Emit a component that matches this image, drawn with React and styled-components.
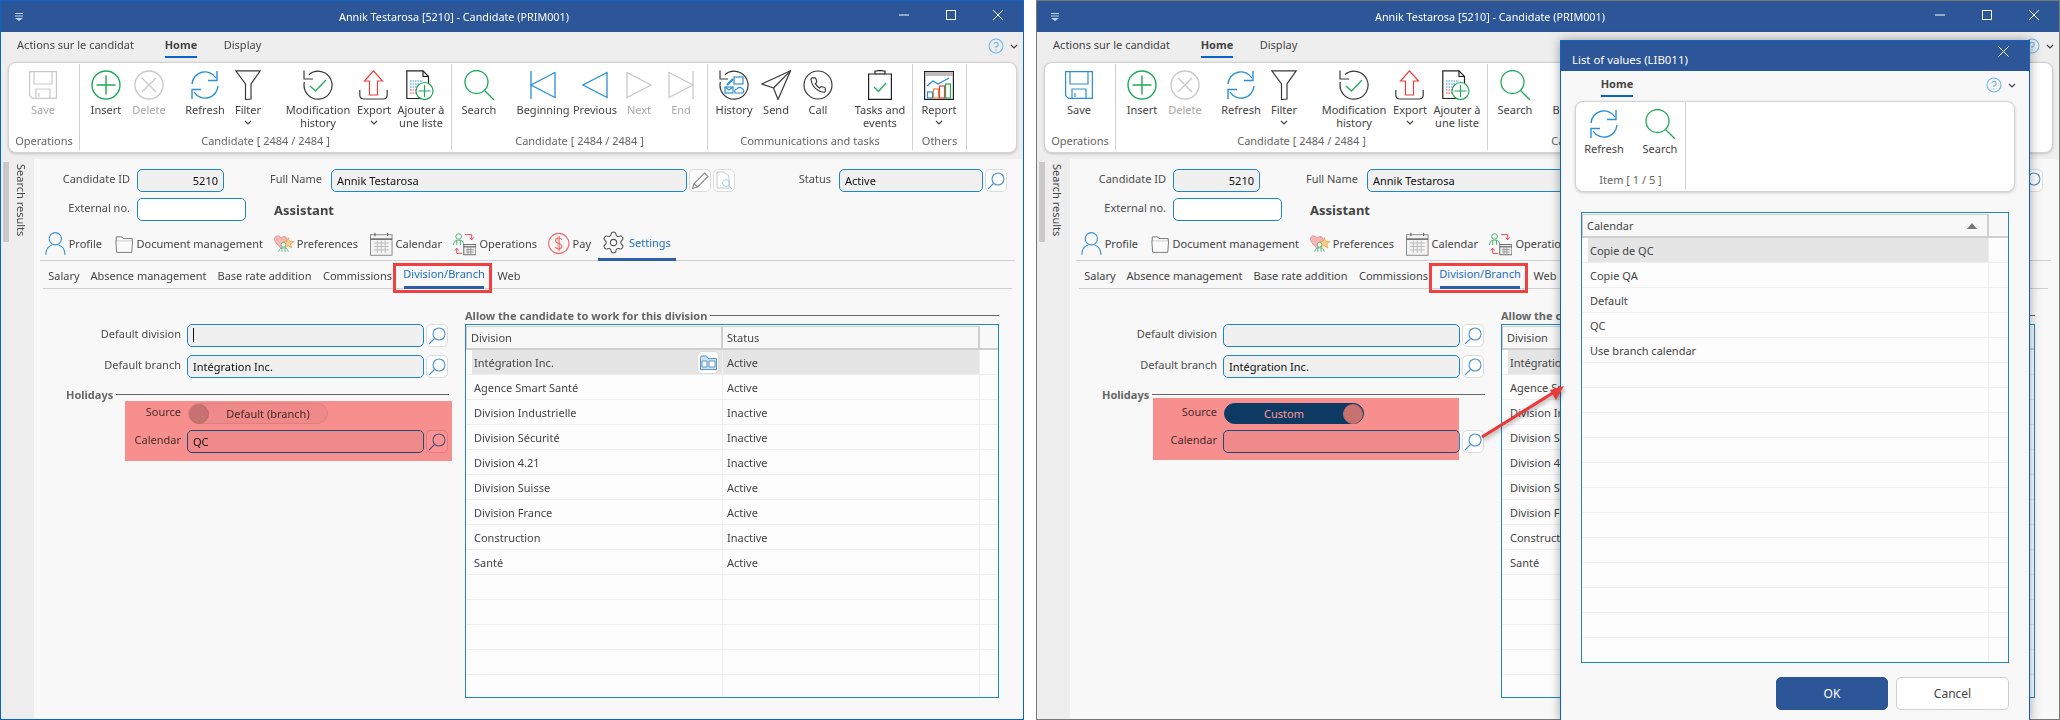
import React from "react";
import styled, { createGlobalStyle } from "styled-components";
import { Settings } from "lucide-react";

const GlobalStyle = createGlobalStyle`
  html, body { margin: 0; padding: 0; background: #fff; overflow: hidden; }
  body { font-family: "Noto Sans", "Open Sans", sans-serif; font-size: 11px; color: #444; }
  * { box-sizing: border-box; }
`;

const BLUE = "#2a8fd8";
const GREEN = "#1fa855";
const GREY = "#c9c9c9";
const DARK = "#3a3a3a";
const RED = "#ea4040";

const Page = styled.div`
  display: flex;
  gap: 12px;
  width: 2060px;
  height: 720px;
`;

const Window = styled.div`
  position: relative;
  display: flex;
  flex-direction: column;
  flex: none;
  width: 1024px;
  height: 720px;
  border: 1px solid ${(p) => p.$border};
  background: #f8f8f8;
`;

const TitleBar = styled.div`
  display: flex;
  align-items: center;
  height: 31px;
  padding-left: 14px;
  background: #2c5697;
  color: #fff;
  font-size: 10.8px;
`;

const QuickMenu = styled.svg`
  flex: none;
  width: 8px;
  height: 8px;
`;

const TitleText = styled.div`
  margin-left: 316px;
  width: 541px;
  white-space: nowrap;
`;

const WinControl = styled.button`
  display: flex;
  align-items: center;
  justify-content: center;
  width: 47px;
  height: 31px;
  padding: 0 0 4px;
  border: 0;
  background: none;
`;

const TopArea = styled.div`
  background: #eeeeee;
  padding-bottom: 6px;
`;

const RibbonTabs = styled.div`
  display: flex;
  align-items: stretch;
  height: 30px;
  padding-left: ${(p) => p.$pad || 16}px;
  padding-right: ${(p) => p.$padRight || 0}px;
`;

const RibbonTab = styled.div`
  display: flex;
  align-items: center;
  height: 26px;
  margin-left: ${(p) => p.$ml || 0}px;
  width: ${(p) => p.$w}px;
  justify-content: center;
  white-space: nowrap;
  font-size: 11px;
  color: #444;
  font-weight: ${(p) => (p.$active ? 700 : 400)};
  border-bottom: 2px solid ${(p) => (p.$active ? "#0a64c8" : "transparent")};
`;

const HelpBox = styled.div`
  display: flex;
  align-items: center;
  gap: 6px;
  margin-left: auto;
  height: 28px;
`;

const Ribbon = styled.div`
  display: flex;
  width: ${(p) => p.$w}px;
  height: 91px;
  margin-left: ${(p) => p.$ml}px;
  padding: 1px 0 2px;
  background: #fff;
  border: 1px solid #d2d2d2;
  border-radius: 8px;
  box-shadow: 0 1px 3px rgba(0, 0, 0, 0.18);
`;

const RibbonGroup = styled.div`
  display: flex;
  flex-direction: column;
  flex: none;
  width: ${(p) => p.$w}px;
  border-right: 1px solid #d0d0d0;
`;

const GroupItems = styled.div`
  display: flex;
  flex: 1;
`;

const GroupLabel = styled.div`
  height: 18px;
  line-height: 18px;
  text-align: center;
  color: #666;
  white-space: nowrap;
`;

const Item = styled.div`
  display: flex;
  flex-direction: column;
  align-items: center;
  flex: none;
  width: ${(p) => p.$w}px;
  margin-left: ${(p) => p.$ml}px;
  padding-top: 5px;
  color: ${(p) => (p.$off ? "#a8a8a8" : "#444")};
`;

const IconBox = styled.div`
  display: flex;
  align-items: center;
  justify-content: center;
  height: 32px;
  margin-bottom: 2px;
`;

const ItemLabel = styled.div`
  line-height: 13px;
  text-align: center;
  white-space: pre;
`;

const MoreChevron = styled.div`
  height: 13px;
  display: flex;
  align-items: center;
`;

const Lower = styled.div`
  display: flex;
  flex: 1;
  min-height: 0;
`;

const Rail = styled.div`
  display: flex;
  flex: none;
  width: 33px;
  background: #eeeeee;
`;

const RailHandle = styled.div`
  width: 6px;
  height: 80px;
  margin: 3px 0 0 2px;
  background: #c9c9c9;
`;

const RailText = styled.div`
  margin: 5px 0 0 5px;
  writing-mode: vertical-rl;
  line-height: 14px;
  height: 80px;
  white-space: nowrap;
  color: #444;
`;

const Content = styled.div`
  flex: 1;
  padding-top: 10px;
  background: #f8f8f8;
`;

const FormRow = styled.div`
  display: flex;
  align-items: center;
  margin-top: ${(p) => p.$mt || 0}px;
`;

const FieldLabel = styled.div`
  flex: none;
  width: ${(p) => p.$w}px;
  margin-right: ${(p) => p.$gap || 7}px;
  padding-bottom: 5px;
  text-align: right;
  white-space: nowrap;
  color: #4c4c4c;
`;

const Field = styled.div`
  display: flex;
  align-items: center;
  justify-content: ${(p) => (p.$right ? "flex-end" : "flex-start")};
  flex: none;
  width: ${(p) => p.$w}px;
  height: 23px;
  padding: 0 5px 1px;
  background: ${(p) => (p.$white ? "#fff" : "#f0f0f0")};
  border: 1px solid #1d86c9;
  border-radius: 5px;
  color: #111;
  white-space: nowrap;
`;

const Caret = styled.span`
  width: 1px;
  height: 14px;
  background: #111;
`;

const IconButton = styled.div`
  display: flex;
  align-items: center;
  justify-content: center;
  flex: none;
  width: 22px;
  height: 23px;
  margin-left: 2px;
  background: #fff;
  border: 1px solid #dcdcdc;
  border-radius: 5px;
`;

const JobTitle = styled.div`
  margin-left: 28px;
  font-size: 13px;
  font-weight: 700;
  color: #444;
`;

const MainTabs = styled.div`
  display: flex;
  height: 35px;
  margin: 5px 8px 0 6px;
  padding-left: 5px;
  border-bottom: 1px solid #d0d0d0;
`;

const MainTab = styled.div`
  display: flex;
  align-items: center;
  gap: 3px;
  flex: none;
  height: 35px;
  width: ${(p) => p.$w}px;
  margin-left: ${(p) => p.$ml || 0}px;
  padding-left: ${(p) => (p.$active ? 3 : 0)}px;
  padding-top: ${(p) => (p.$active ? 1 : 0)}px;
  border-bottom: ${(p) => (p.$active ? "3px solid #2c5fa8" : "0")};
  color: ${(p) => (p.$active ? "#1f6fc4" : "#444")};
  white-space: nowrap;
`;

const SubTabs = styled.div`
  display: flex;
  height: 28px;
  margin: 0 11px 0 9px;
  padding-left: 6px;
  border-bottom: 1px solid #d0d0d0;
`;

const SubTab = styled.div`
  position: relative;
  display: flex;
  align-items: center;
  justify-content: center;
  flex: none;
  height: 28px;
  width: ${(p) => p.$w}px;
  margin-left: ${(p) => p.$ml || 0}px;
  border-bottom: ${(p) => (p.$active ? "3px solid #2c5fa8" : "0")};
  color: ${(p) => (p.$active ? "#1f6fc4" : "#444")};
  white-space: nowrap;
`;

const RedBox = styled.div`
  position: absolute;
  top: 2px;
  left: -11px;
  right: -8px;
  height: 30px;
  border: 3px solid #f04040;
`;

const Panels = styled.div`
  display: flex;
`;

const LeftPanel = styled.div`
  flex: none;
  width: 431px;
  padding-top: 35px;
`;

const RightPanel = styled.div`
  flex: none;
  width: 534px;
  padding-top: 19px;
`;

const SectionTitle = styled.div`
  display: flex;
  align-items: center;
  gap: 3px;
  height: 14px;
  width: ${(p) => p.$w}px;
  margin-top: ${(p) => p.$mt || 0}px;
  padding-left: ${(p) => p.$pad || 0}px;
  font-weight: 700;
  color: #666;
  white-space: nowrap;

  &::after {
    content: "";
    flex: 1;
    height: 1px;
    background: #666;
  }
`;

const Toggle = styled.div`
  display: flex;
  align-items: center;
  flex-direction: ${(p) => (p.$on ? "row-reverse" : "row")};
  flex: none;
  width: 140px;
  height: 21px;
  background: ${(p) => (p.$on ? "#0c64ac" : "#f0f0f0")};
  border: 1px solid ${(p) => (p.$on ? "#0c64ac" : "#dcdcdc")};
  border-radius: 11px;
  color: ${(p) => (p.$on ? "#fff" : "#444")};
`;

const Knob = styled.div`
  flex: none;
  width: 20px;
  height: 20px;
  border-radius: 50%;
  background: #c8c4c4;
  border: 1px solid #bbb;
`;

const ToggleText = styled.div`
  flex: 1;
  text-align: center;
`;

const RedOverlay = styled.div`
  position: absolute;
  left: ${(p) => p.$x}px;
  top: ${(p) => p.$y}px;
  width: ${(p) => p.$w}px;
  height: ${(p) => p.$h}px;
  background: #ff9393;
  mix-blend-mode: multiply;
`;

const Table = styled.div`
  height: ${(p) => p.$h}px;
  margin-top: ${(p) => p.$mt || 0}px;
  padding-top: 1px;
  overflow: hidden;
  background: #fdfdfd;
  border: 1px solid #1d86c9;
`;

const HeadRow = styled.div`
  display: grid;
  grid-template-columns: ${(p) => p.$cols};
  height: 24px;
  background: #f8f8f8;
  border-bottom: 2px solid #cfcfcf;
`;

const HeadCell = styled.div`
  display: flex;
  align-items: center;
  justify-content: space-between;
  padding: 0 10px 0 4px;
  border-right: ${(p) => (p.$last ? "0" : "2px solid #cfcfcf")};
  border-left: ${(p) => (p.$first ? "1px solid #cfcfcf" : "0")};
  border-top: ${(p) => (p.$last ? "0" : "1px solid #cfcfcf")};
  color: #444;
`;

const DataRow = styled.div`
  display: grid;
  grid-template-columns: ${(p) => p.$cols};
  height: 25px;
  border-bottom: 1px solid #efefef;
`;

const DataCell = styled.div`
  display: flex;
  align-items: center;
  justify-content: space-between;
  padding: 0 2px 0 ${(p) => (p.$first ? 2 : 4)}px;
  margin-left: ${(p) => (p.$first ? 6 : 0)}px;
  background: ${(p) => (p.$selected ? "#e5e5e5" : "transparent")};
  border-right: ${(p) => (p.$last ? "0" : "1px solid #efefef")};
  color: #444;
  white-space: nowrap;
`;

const RowButton = styled(IconButton)`
  margin-right: 1px;
`;

const Dialog = styled.div`
  position: absolute;
  left: 523px;
  top: 39px;
  display: flex;
  flex-direction: column;
  width: 470px;
  height: 681px;
  background: #f8f8f8;
  border: 1px solid #0a64c8;
  border-bottom: 0;
  box-shadow: 0 0 10px rgba(0, 0, 0, 0.35);
`;

const DialogTitle = styled.div`
  display: flex;
  justify-content: space-between;
  height: 30px;
  padding: 11px 0 0 11px;
  background: #2c5697;
  color: #fff;
  font-size: 11.4px;
`;

const DialogClose = styled.button`
  width: 20px;
  height: 16px;
  margin: -8px 16px 0 0;
  padding: 0;
  border: 0;
  background: none;
`;

const DialogFooter = styled.div`
  display: flex;
  justify-content: flex-end;
  gap: 8px;
  padding: 14px 20px 0 0;
`;

const DialogButton = styled.button`
  width: ${(p) => p.$w}px;
  height: 33px;
  padding: 0;
  font: inherit;
  font-size: 12px;
  border-radius: 5px;
  background: ${(p) => (p.$primary ? "#2c5697" : "#fff")};
  color: ${(p) => (p.$primary ? "#fff" : "#444")};
  border: 1px solid ${(p) => (p.$primary ? "#2c5697" : "#cfcfcf")};
`;

const DialogBody = styled.div`
  padding: 0 20px;
  margin-top: 20px;
`;

const ArrowWrap = styled.svg`
  position: absolute;
  left: 437px;
  top: 376px;
  overflow: visible;
  filter: drop-shadow(1px 2px 2px rgba(0, 0, 0, 0.35));
`;

const Icon = ({ w = 30, h = 30, vb, children, ...rest }) => (
  <svg width={w} height={h} viewBox={vb || `0 0 ${w} ${h}`} fill="none" strokeWidth="1.2" {...rest}>
    {children}
  </svg>
);

const SaveIcon = ({ off }) => {
  const c = off ? GREY : BLUE;
  return (
    <Icon w={28} h={28} stroke={c}>
      <path d="M.6.6H27.4V27.4H3.5L.6 24.5Z" />
      <path d="M5 .6V13H23V.6" />
      <path d="M7 27.4V18H21V27.4" />
      <path d="M10 22V26" />
    </Icon>
  );
};

const InsertIcon = () => (
  <Icon stroke={GREEN} strokeWidth="1.4">
    <circle cx="15" cy="15" r="14" />
    <path d="M15 5.5V24.5M5.5 15H24.5" />
  </Icon>
);

const DeleteIcon = () => (
  <Icon stroke={GREY} strokeWidth="1.4">
    <circle cx="15" cy="15" r="14" />
    <path d="M8 8L22 22M22 8L8 22" />
  </Icon>
);

const RefreshIcon = () => (
  <Icon stroke={BLUE} strokeWidth="1.4">
    <path d="M2 14A13 13 0 0 1 26 8" />
    <path d="M27 1V10.5H18" />
    <path d="M28 16A13 13 0 0 1 4 22" />
    <path d="M2 29V19.5H11" />
  </Icon>
);

const FilterIcon = () => (
  <Icon w={26} stroke={DARK}>
    <path d="M.8 .8H25.2L16 14V29L10.5 29.5V14Z" />
  </Icon>
);

const ModHistoryIcon = () => (
  <Icon stroke={DARK}>
    <path d="M6 4.5A14 14 0 1 1 1.4 12" />
    <path d="M1 .5V9H10" />
    <path d="M7 16L12.5 21L23 10" stroke="#2cb060" strokeWidth="1.4" />
  </Icon>
);

const ExportIcon = () => (
  <Icon>
    <path d="M14.5 .8L23.5 11H18.5V25H10.5V11H5.5Z" stroke={RED} />
    <path d="M.8 20V25Q.8 29 5 29H24Q28.2 29 28.2 25V20" stroke={DARK} />
  </Icon>
);

const AddToListIcon = () => (
  <Icon>
    <path d="M.8 .8H17L22.5 6.5V28.5H.8Z" stroke="#222" />
    <path d="M17 .8V6.5H22.5" stroke="#222" />
    <path d="M4 11H17M4 14H15M4 17H12" stroke={BLUE} strokeDasharray="1.5 1" />
    <path d="M4 20H10M4 23H10" stroke={RED} strokeDasharray="1.5 1" />
    <circle cx="18.5" cy="21" r="8.5" fill="#fff" stroke={GREEN} />
    <path d="M18.5 15V27M12.5 21H24.5" stroke={GREEN} />
  </Icon>
);

const SearchIcon = () => (
  <Icon stroke={GREEN} strokeWidth="1.3">
    <circle cx="12.5" cy="12" r="11.5" />
    <path d="M20.5 20.5L30 30" />
  </Icon>
);

const TriangleIcon = ({ dir, bar, color }) => (
  <Icon w={26} h={28} stroke={color} strokeWidth="1.3">
    {dir === "left" ? <path d="M25 1.5V26.5L1 14Z" /> : <path d="M1 1.5V26.5L25 14Z" />}
    {bar && <path d={dir === "left" ? "M1 0V28" : "M25 0V28"} />}
  </Icon>
);

const HistoryIcon = () => (
  <Icon stroke={DARK}>
    <path d="M6 4.5A14 14 0 1 1 1.4 12" />
    <path d="M1 .5V9H9" />
    <rect x="15" y="7" width="9" height="7" stroke={BLUE} />
    <path d="M8 15L14 9" stroke={BLUE} strokeWidth="2" />
    <rect x="6" y="17" width="8" height="6" stroke={BLUE} />
    <path d="M6 17L10 20L14 17" stroke={BLUE} />
    <path d="M16 23H24Q26 20 23 18.5Q20 16 18 19Q15 19 16 23Z" stroke={BLUE} />
  </Icon>
);

const SendIcon = () => (
  <Icon stroke={DARK}>
    <path d="M.8 14L29.5 .8L17 29.5L12.5 18Z" />
    <path d="M12.5 18L29.5 .8" />
  </Icon>
);

const CallIcon = () => (
  <Icon stroke={DARK}>
    <circle cx="15" cy="15" r="14" />
    <g transform="translate(6.5 6.5) scale(.72)" strokeWidth="1.6">
      <path d="M22 16.92v3a2 2 0 0 1-2.18 2 19.79 19.79 0 0 1-8.63-3.07 19.5 19.5 0 0 1-6-6 19.79 19.79 0 0 1-3.07-8.67A2 2 0 0 1 4.11 2h3a2 2 0 0 1 2 1.72 12.84 12.84 0 0 0 .7 2.81 2 2 0 0 1-.45 2.11L8.09 9.91a16 16 0 0 0 6 6l1.27-1.27a2 2 0 0 1 2.11-.45 12.84 12.84 0 0 0 2.81.7A2 2 0 0 1 22 16.92z" />
    </g>
  </Icon>
);

const TasksIcon = () => (
  <Icon w={24} stroke="#222">
    <path d="M.6 4H7V1H9L10 .6H14L15 1H17V4H23.4V29.4H.6Z" />
    <path d="M7 4H17" />
    <path d="M6 17L10.5 21.5L18 13" stroke="#2cb060" strokeWidth="1.4" />
  </Icon>
);

const ReportIcon = () => (
  <Icon h={29} stroke="#222">
    <rect x=".6" y=".6" width="28.8" height="27.8" />
    <rect x="1" y="1" width="28" height="4" fill="#bdbdbd" stroke="none" />
    <path d="M3 15L9 10L14 13L25 7" stroke={BLUE} />
    <rect x="3.5" y="21" width="5" height="6" stroke={BLUE} />
    <rect x="9.5" y="18" width="5" height="9" stroke="#e8883a" />
    <rect x="15.5" y="15" width="5" height="12" stroke={RED} />
    <rect x="21.5" y="13" width="5" height="14" stroke={GREEN} />
  </Icon>
);

const Chevron = ({ color = "#444" }) => (
  <svg width="8" height="5" viewBox="0 0 8 5" fill="none" stroke={color} strokeWidth="1.2">
    <path d="M1 1L4 4L7 1" />
  </svg>
);

const HelpIcon = () => (
  <svg width="16" height="16" viewBox="0 0 16 16" fill="none" stroke="#6fb7e8" strokeWidth="1.1">
    <circle cx="8" cy="8" r="7" />
    <path d="M5.8 6.2A2.2 2.2 0 1 1 8 8.6V10M8 11.3V12.6" />
  </svg>
);

const LensIcon = () => (
  <svg width="18" height="18" viewBox="0 0 18 18" fill="none" stroke="#4a90d0" strokeWidth="1.1">
    <circle cx="11" cy="7" r="6" />
    <path d="M6.5 11.5L1 17" />
  </svg>
);

const PencilIcon = () => (
  <svg width="18" height="18" viewBox="0 0 18 18" fill="none" stroke="#8a8a8a" strokeWidth="1.1">
    <path d="M1.5 16.5L3 11.5L13.5 1L17 4.5L6.5 15Z" />
    <path d="M3 11.5L6.5 15" />
  </svg>
);

const DocSearchIcon = () => (
  <svg width="18" height="19" viewBox="0 0 18 19" fill="none" stroke="#c4c4c4" strokeWidth="1">
    <path d="M2 1H9L14 5V17H2Z" />
    <circle cx="11" cy="12" r="3.5" stroke="#a9d2ee" />
    <path d="M13.5 14.5L17 18" stroke="#a9d2ee" />
  </svg>
);

const BrowseIcon = () => (
  <svg width="17" height="15" viewBox="0 0 17 15" fill="#cfe3f5" stroke="#5a93c8" strokeWidth="1">
    <path d="M.5 3.5V14.5H16.5V3.5H8L6.5 1H1Z" />
    <path d="M2 6H7V12H2ZM9 6H15V12H9Z" fill="#fff" />
  </svg>
);

const ProfileIcon = () => (
  <svg width="22" height="25" viewBox="0 0 22 25" fill="none" stroke="#3a90d8" strokeWidth="1.2">
    <circle cx="11" cy="7.5" r="6.5" />
    <path d="M.8 24.5C.8 18 4.5 15 7.5 14M21.2 24.5C21.2 18 17.5 15 14.5 14" />
  </svg>
);

const FolderIcon = () => (
  <svg width="22" height="22" viewBox="0 0 22 22" fill="#fafafa" stroke="#666" strokeWidth="1">
    <path d="M1 7L2 21H20L21 7Z" />
    <path d="M1.5 7V2.5H8L9.5 4.5H20.5V7" />
  </svg>
);

const PreferencesIcon = () => (
  <svg width="25" height="24" viewBox="0 0 25 24">
    <path d="M9 18L1.5 9Q-1 4 3 2Q7 .5 9 4.5Q12 1 15 3Q17 6 15 10Z" fill="#f4b6b6" stroke="#e88a8a" />
    <path d="M18 4L20 9H25L21 12L22.5 17L18 14L14 17L15 12L12 9H16Z" fill="#f8d08a" stroke="#e8a040" />
    <circle cx="12" cy="13" r="3" fill="#fff" stroke="#3cb56c" />
    <path d="M6 22C7 17 9 17 12 17C15 17 17 17 18 22M10 17V22M14 17V22" fill="none" stroke="#3cb56c" />
  </svg>
);

const CalendarIcon = () => (
  <svg width="23" height="24" viewBox="0 0 23 24" fill="#f4f4f4" stroke="#8a8a8a" strokeWidth="1">
    <rect x=".5" y="2.5" width="22" height="21" />
    <path d="M.5 7H22.5" stroke="#555" strokeWidth="1.4" />
    <path d="M5 .5V4M18 .5V4" stroke="#555" />
    <path d="M4 11H19M4 14.5H19M4 18H19M7.5 8.5V21M11.5 8.5V21M15.5 8.5V21" stroke="#bbb" fill="none" />
  </svg>
);

const OperationsIcon = () => (
  <svg width="25" height="24" viewBox="0 0 25 24" fill="none">
    <circle cx="6" cy="4" r="3" stroke="#3cb56c" />
    <path d="M.5 13C1 8.5 3 8 6 8C9 8 11 8.5 11.5 13M4 8V13M8 8V13" stroke="#3cb56c" />
    <path d="M13 2H20V7M18 5L20 7.5L22 5" stroke={RED} />
    <path d="M10 22H4V17M2 19L4 16.5L6 19" stroke={RED} />
    <rect x="11.5" y="12.5" width="13" height="11" fill="#efefef" stroke="#666" />
    <path d="M11.5 15H24.5" stroke="#444" />
    <path d="M14 18H22M14 20.5H22M16 15V23M19 15V23" stroke="#999" />
  </svg>
);

const PayIcon = () => (
  <svg width="23" height="23" viewBox="0 0 23 23" fill="none" stroke="#ef6a6a" strokeWidth="1.1">
    <circle cx="11.5" cy="11.5" r="10.8" />
    <path d="M15 7.5C14 5.5 8 5 8 8.5C8 12 15 11 15 14.5C15 18 8.5 17.5 7.5 15" />
    <path d="M10.7 3.5V19.5M12.3 3.5V19.5" strokeWidth=".8" />
  </svg>
);

const ribbonGroups = (saveOff) => [
  {
    w: 71,
    label: "Operations",
    items: [{ icon: <SaveIcon off={saveOff} />, text: "Save", w: 30, ml: 19, off: saveOff }],
  },
  {
    w: 372,
    label: "Candidate [ 2484 / 2484 ]",
    items: [
      { icon: <InsertIcon />, text: "Insert", w: 30, ml: 11 },
      { icon: <DeleteIcon />, text: "Delete", w: 34, ml: 11, off: true },
      { icon: <RefreshIcon />, text: "Refresh", w: 40, ml: 19 },
      { icon: <FilterIcon />, text: "Filter", w: 26, ml: 10, more: true },
      { icon: <ModHistoryIcon />, text: "Modification\nhistory", w: 68, ml: 23 },
      { icon: <ExportIcon />, text: "Export", w: 34, ml: 5, more: true },
      { icon: <AddToListIcon />, text: "Ajouter à\nune liste", w: 48, ml: 6 },
    ],
  },
  {
    w: 256,
    label: "Candidate [ 2484 / 2484 ]",
    items: [
      { icon: <SearchIcon />, text: "Search", w: 36, ml: 9 },
      { icon: <TriangleIcon dir="left" bar color={BLUE} />, text: "Beginning", w: 52, ml: 20 },
      { icon: <TriangleIcon dir="left" color={BLUE} />, text: "Previous", w: 42, ml: 5 },
      { icon: <TriangleIcon dir="right" color={GREY} />, text: "Next", w: 24, ml: 11, off: true },
      { icon: <TriangleIcon dir="right" bar color={GREY} />, text: "End", w: 22, ml: 19, off: true },
    ],
  },
  {
    w: 205,
    label: "Communications and tasks",
    items: [
      { icon: <HistoryIcon />, text: "History", w: 36, ml: 8 },
      { icon: <SendIcon />, text: "Send", w: 26, ml: 11 },
      { icon: <CallIcon />, text: "Call", w: 20, ml: 19 },
      { icon: <TasksIcon />, text: "Tasks and\nevents", w: 52, ml: 26 },
    ],
  },
  {
    w: 54,
    label: "Others",
    items: [{ icon: <ReportIcon />, text: "Report", w: 36, ml: 8, more: true }],
  },
];

const dialogGroups = [
  {
    w: 110,
    label: "Item [ 1 / 5 ]",
    items: [
      { icon: <RefreshIcon />, text: "Refresh", w: 40, ml: 8 },
      { icon: <SearchIcon />, text: "Search", w: 36, ml: 18 },
    ],
  },
];

const DIVISIONS = [
  ["Intégration Inc.", "Active"],
  ["Agence Smart Santé", "Active"],
  ["Division Industrielle", "Inactive"],
  ["Division Sécurité", "Inactive"],
  ["Division 4.21", "Inactive"],
  ["Division Suisse", "Active"],
  ["Division France", "Active"],
  ["Construction", "Inactive"],
  ["Santé", "Active"],
];

const CALENDARS = ["Copie de QC", "Copie QA", "Default", "QC", "Use branch calendar"];

const MAIN_COLS = "257px 257px 1fr";
const DIALOG_COLS = "407px 1fr";

function RibbonBar({ groups, width, ml }) {
  return (
    <Ribbon $w={width} $ml={ml}>
      {groups.map((group, i) => (
        <RibbonGroup key={i} $w={group.w}>
          <GroupItems>
            {group.items.map((item) => (
              <Item key={item.text} $w={item.w} $ml={item.ml} $off={item.off}>
                <IconBox>{item.icon}</IconBox>
                <ItemLabel>{item.text}</ItemLabel>
                {item.more && (
                  <MoreChevron>
                    <Chevron />
                  </MoreChevron>
                )}
              </Item>
            ))}
          </GroupItems>
          <GroupLabel>{group.label}</GroupLabel>
        </RibbonGroup>
      ))}
    </Ribbon>
  );
}

function CandidateWindow({ border, saveOff, custom, overlay, children }) {
  return (
    <Window $border={border}>
      <TitleBar>
        <QuickMenu viewBox="0 0 8 8" fill="#c8d4e6">
          <path d="M0 0H8V1H0ZM0 2.5H8V3.5H0ZM0 5H8L4 8Z" />
        </QuickMenu>
        <TitleText>Annik Testarosa [5210] - Candidate (PRIM001)</TitleText>
        <WinControl aria-label="Minimize">
          <svg width="10" height="2" stroke="#fff"><path d="M0 1H10" /></svg>
        </WinControl>
        <WinControl aria-label="Maximize">
          <svg width="10" height="10" fill="none" stroke="#fff"><rect x=".5" y=".5" width="9" height="9" /></svg>
        </WinControl>
        <WinControl aria-label="Close">
          <svg width="10" height="10" stroke="#fff"><path d="M0 0L10 10M10 0L0 10" /></svg>
        </WinControl>
      </TitleBar>

      <TopArea>
        <RibbonTabs $padRight={5}>
          <RibbonTab $w={117}>Actions sur le candidat</RibbonTab>
          <RibbonTab $w={32} $ml={31} $active>Home</RibbonTab>
          <RibbonTab $w={37} $ml={27}>Display</RibbonTab>
          <HelpBox>
            <HelpIcon />
            <Chevron />
          </HelpBox>
        </RibbonTabs>
        <RibbonBar groups={ribbonGroups(saveOff)} width={1009} ml={7} />
      </TopArea>

      <Lower>
        <Rail>
          <RailHandle />
          <RailText>Search results</RailText>
        </Rail>
        <Content>
          <FormRow>
            <FieldLabel $w={96}>Candidate ID</FieldLabel>
            <Field $w={87} $right>5210</Field>
            <FieldLabel $w={98} $gap={9}>Full Name</FieldLabel>
            <Field $w={356}>Annik Testarosa</Field>
            <IconButton><PencilIcon /></IconButton>
            <IconButton><DocSearchIcon /></IconButton>
            <FieldLabel $w={96} $gap={8}>Status</FieldLabel>
            <Field $w={144}>Active</Field>
            <IconButton><LensIcon /></IconButton>
          </FormRow>
          <FormRow $mt={6}>
            <FieldLabel $w={96}>External no.</FieldLabel>
            <Field $w={109} $white />
            <JobTitle>Assistant</JobTitle>
          </FormRow>

          <MainTabs>
            <MainTab $w={57}><ProfileIcon />Profile</MainTab>
            <MainTab $w={148} $ml={13}><FolderIcon />Document management</MainTab>
            <MainTab $w={84} $ml={11}><PreferencesIcon />Preferences</MainTab>
            <MainTab $w={72} $ml={12}><CalendarIcon />Calendar</MainTab>
            <MainTab $w={84} $ml={11}><OperationsIcon />Operations</MainTab>
            <MainTab $w={43} $ml={11}><PayIcon />Pay</MainTab>
            <MainTab $w={78} $ml={7} $active>
              <Settings size={25} strokeWidth={1} color="#555" />
              Settings
            </MainTab>
          </MainTabs>

          <SubTabs>
            <SubTab $w={30}>Salary</SubTab>
            <SubTab $w={113} $ml={13}>Absence management</SubTab>
            <SubTab $w={93} $ml={13}>Base rate addition</SubTab>
            <SubTab $w={67} $ml={13}>Commissions</SubTab>
            <SubTab $w={80} $ml={13} $active>
              Division/Branch
              <RedBox />
            </SubTab>
            <SubTab $w={24} $ml={13}>Web</SubTab>
          </SubTabs>

          <Panels>
            <LeftPanel>
              <FormRow>
                <FieldLabel $w={147} $gap={6}>Default division</FieldLabel>
                <Field $w={237}>{!custom && <Caret />}</Field>
                <IconButton><LensIcon /></IconButton>
              </FormRow>
              <FormRow $mt={8}>
                <FieldLabel $w={147} $gap={6}>Default branch</FieldLabel>
                <Field $w={237}>Intégration Inc.</Field>
                <IconButton><LensIcon /></IconButton>
              </FormRow>
              <SectionTitle $w={415} $pad={32} $mt={9}>Holidays</SectionTitle>
              <FormRow $mt={2}>
                <FieldLabel $w={147} $gap={7}>Source</FieldLabel>
                <Toggle $on={custom}>
                  <Knob />
                  <ToggleText>{custom ? "Custom" : "Default (branch)"}</ToggleText>
                </Toggle>
              </FormRow>
              <FormRow $mt={6}>
                <FieldLabel $w={147} $gap={6}>Calendar</FieldLabel>
                <Field $w={237}>{custom ? "" : "QC"}</Field>
                <IconButton><LensIcon /></IconButton>
              </FormRow>
            </LeftPanel>
            <RightPanel>
              <SectionTitle $w={534}>Allow the candidate to work for this division</SectionTitle>
              <Table $h={374} $mt={2}>
                <HeadRow $cols={MAIN_COLS}>
                  <HeadCell $first>Division</HeadCell>
                  <HeadCell>Status</HeadCell>
                  <HeadCell $last />
                </HeadRow>
                {Array.from({ length: 14 }, (_, i) => {
                  const row = DIVISIONS[i] || ["", ""];
                  return (
                    <DataRow key={i} $cols={MAIN_COLS}>
                      <DataCell $first $selected={i === 0}>
                        {row[0]}
                        {i === 0 && <RowButton><BrowseIcon /></RowButton>}
                      </DataCell>
                      <DataCell $selected={i === 0}>{row[1]}</DataCell>
                      <DataCell $last />
                    </DataRow>
                  );
                })}
              </Table>
            </RightPanel>
          </Panels>
        </Content>
      </Lower>

      <RedOverlay {...overlay} />
      {children}
    </Window>
  );
}

function CalendarDialog() {
  return (
    <Dialog>
      <DialogTitle>
        List of values (LIB011)
        <DialogClose aria-label="Close">
          <svg width="11" height="11" stroke="#fff"><path d="M.5 .5L10.5 10.5M10.5 .5L.5 10.5" /></svg>
        </DialogClose>
      </DialogTitle>
      <RibbonTabs $pad={40} $padRight={13}>
        <RibbonTab $w={32} $active>Home</RibbonTab>
        <HelpBox>
          <HelpIcon />
          <Chevron />
        </HelpBox>
      </RibbonTabs>
      <RibbonBar groups={dialogGroups} width={440} ml={14} />
      <DialogBody>
        <Table $h={451}>
          <HeadRow $cols={DIALOG_COLS}>
            <HeadCell $first>
              Calendar
              <svg width="10" height="6" fill="#777"><path d="M5 0L10 6H0Z" /></svg>
            </HeadCell>
            <HeadCell $last />
          </HeadRow>
          {Array.from({ length: 17 }, (_, i) => (
            <DataRow key={i} $cols={DIALOG_COLS}>
              <DataCell $first $selected={i === 0}>{CALENDARS[i] || ""}</DataCell>
              <DataCell $last />
            </DataRow>
          ))}
        </Table>
      </DialogBody>
      <DialogFooter>
        <DialogButton $w={112} $primary>OK</DialogButton>
        <DialogButton $w={113}>Cancel</DialogButton>
      </DialogFooter>
    </Dialog>
  );
}

export default function App() {
  return (
    <Page>
      <GlobalStyle />
      <CandidateWindow
        border="#0a64c8"
        saveOff
        overlay={{ $x: 124, $y: 400, $w: 327, $h: 60 }}
      />
      <CandidateWindow
        border="#777777"
        custom
        overlay={{ $x: 116, $y: 397, $w: 306, $h: 62 }}
      >
        <CalendarDialog />
        <ArrowWrap width="100" height="70" viewBox="0 0 100 70" fill="none">
          <path d="M8 60L82 14" stroke="#e83a3a" strokeWidth="3" />
          <path d="M90 9L76 13L82 23Z" fill="#e83a3a" />
        </ArrowWrap>
      </CandidateWindow>
    </Page>
  );
}
